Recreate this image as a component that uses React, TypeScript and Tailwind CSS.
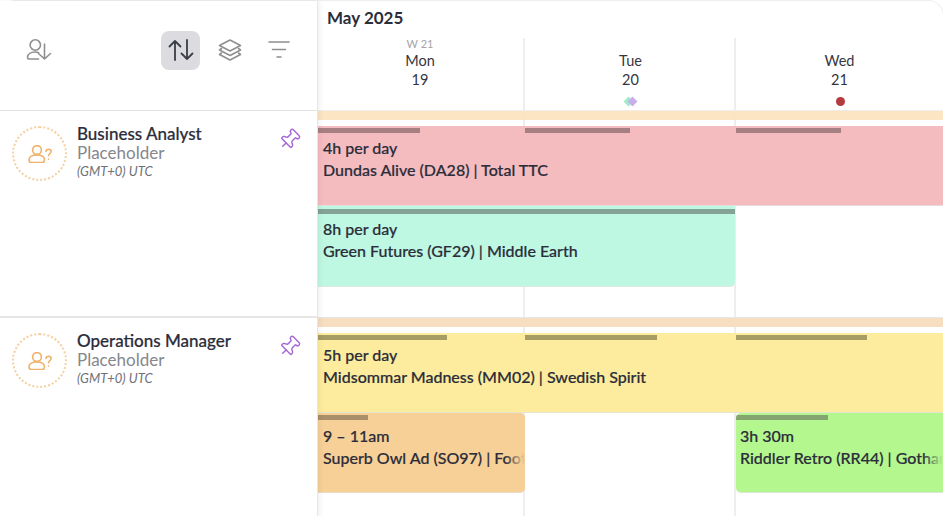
import { Pin } from 'lucide-react';

const days = [
  { week: 'W 21', name: 'Mon', date: '19' },
  { week: '', name: 'Tue', date: '20' },
  { week: '', name: 'Wed', date: '21' },
];

function UserSortIcon() {
  return (
    <svg width="26" height="24" viewBox="0 0 26 24" fill="none" stroke="#8f8f8f" strokeWidth="1.600" strokeLinecap="round" strokeLinejoin="round">
      <circle cx="9.300" cy="7" r="5.200" />
      <path d="M12.500 21H3a1.500 1.500 0 0 1-1.500-1.500c0-3.500 3.500-5.500 7.500-5.500 1.500 0 2.500.2 3.500.6" />
      <path d="M18.500 6v15M12.500 15.500l6 5.500 6-5.500" />
    </svg>
  );
}

function SortIcon() {
  return (
    <svg width="26" height="24" viewBox="0 0 26 24" fill="none" stroke="#3a3d47" strokeWidth="1.800" strokeLinecap="round" strokeLinejoin="round">
      <path d="M7 22V3M1.500 8.500 7 3l5.500 5.500" />
      <path d="M19 2v19M13.500 15.500 19 21l5.500-5.500" />
    </svg>
  );
}

function LayersIcon() {
  return (
    <svg width="24" height="24" viewBox="0 0 24 24" fill="none" stroke="#8f8f8f" strokeWidth="1.600" strokeLinecap="round" strokeLinejoin="round">
      <path d="M12 2 22.500 7.500 12 13 1.500 7.500Z" />
      <path d="M3.500 10.500 1.500 12 12 17.500 22.500 12l-2-1.500" />
      <path d="M3.500 15 1.500 16.500 12 22l10.500-5.500-2-1.500" />
    </svg>
  );
}

function FilterIcon() {
  return (
    <svg width="22" height="20" viewBox="0 0 22 20" fill="none" stroke="#8f8f8f" strokeWidth="1.600" strokeLinecap="round">
      <path d="M1 2h20M4.500 9.500h13M9 17h4" />
    </svg>
  );
}

function PlaceholderAvatar() {
  return (
    <div className="flex h-[55px] w-[55px] shrink-0 items-center justify-center rounded-full border-2 border-dotted border-[#f5d0a0]">
      <svg width="24" height="18" viewBox="0 0 24 18" fill="none" stroke="#f0b26a" strokeWidth="1.600" strokeLinecap="round" strokeLinejoin="round">
        <circle cx="9" cy="5" r="4.400" />
        <path d="M1 15c0-3.500 3.500-5 8-5s7.500 1.500 7.500 5c0 1.500-1 2.500-2.500 2.500H3.500C2 17.500 1 16.500 1 15Z" />
        <path d="M18 6.500c0-1.500 1.200-2.300 2.500-2.300s2.700.8 2.700 2.400c0 2-2.700 2-2.700 4.200" />
        <path d="M20.500 14v.1" />
      </svg>
    </div>
  );
}

function Resource({ name }: { name: string }) {
  return (
    <div className="flex items-start pl-3 pr-[15px] pt-[15px]">
      <PlaceholderAvatar />
      <div className="ml-[10px] flex-1 -mt-[2px]">
        <p className="text-[17px] leading-[19px] font-medium text-[#2b2d3a] [-webkit-text-stroke:0.2px_#2b2d3a]">{name}</p>
        <p className="text-[17px] leading-[20px] text-[#85878d]">Placeholder</p>
        <p className="text-[13px] leading-[16px] italic text-[#6f7177]">(GMT+0) UTC</p>
      </div>
      <Pin className="mr-px mt-[2px] h-[23px] w-[23px] rotate-45 text-[#a566d6]" strokeWidth={1.500} />
    </div>
  );
}

function Bars({ bars, tone }: { bars: string[]; tone: string }) {
  return (
    <div className={`grid h-[5px] ${bars.length === 3 ? 'grid-cols-[207px_211px_1fr]' : 'grid-cols-1'}`}>
      {bars.map((w, i) => (
        <div key={i} className={`h-[5px] ${w} ${tone}`} />
      ))}
    </div>
  );
}

function BlockText({ hours, title, className = 'pl-[5px] pt-1' }: { hours: string; title: string; className?: string }) {
  return (
    <div className={`whitespace-nowrap text-[16px] leading-[22px] font-medium text-[#2b2d3a] [-webkit-text-stroke:0.2px_#2b2d3a] ${className}`}>
      <p>{hours}</p>
      <p>{title}</p>
    </div>
  );
}

export default function App() {
  return (
    <div className="h-[516px] w-[943px] overflow-hidden bg-white font-['Lato','Liberation_Sans',sans-serif]">
      <div className="flex h-[530px] rounded-t-[16px] border-x border-t border-[#eeeeee] -mx-px w-[945px]">
        {/* Left column */}
        <div className="relative z-10 w-[318px] shrink-0 border-r border-[#e6e6e6] bg-white shadow-[2px_0_5px_rgba(0,0,0,0.06)]">
          <div className="flex h-[110px] items-center border-b border-[#e2e2e2] pb-[11px] pl-[26px] pr-[27px]">
            <UserSortIcon />
            <div className="ml-auto flex h-[39px] w-[39px] items-center justify-center rounded-[8px] bg-[#dcdce0]">
              <SortIcon />
            </div>
            <div className="ml-[18px]"><LayersIcon /></div>
            <div className="ml-[26px]"><FilterIcon /></div>
          </div>
          <div className="h-[207px] border-b-2 border-[#e6e6e6]">
            <Resource name="Business Analyst" />
          </div>
          <Resource name="Operations Manager" />
        </div>

        {/* Calendar */}
        <div className="relative w-[625px] shrink-0">
          {/* day lines sit behind the bookings */}
          <div className="absolute inset-x-0 bottom-0 top-[37px] grid grid-cols-[207px_211px_1fr]">
            <div className="border-r-2 border-[#eeeeee]" />
            <div className="border-r-2 border-[#eeeeee]" />
            <div />
          </div>

          <div className="relative">
            <div className="h-[36px] pl-[9px] pt-[6px] text-[17px] leading-[22px] font-bold text-[#2b2d3a]">May 2025</div>
            <div className="grid h-[73px] grid-cols-[207px_211px_1fr] text-center text-[#34363f]">
              {days.map((d, i) => (
                <div key={d.name} className={`flex flex-col items-center ${i === 0 ? 'pr-[3px]' : ''}`}>
                  <p className="h-[14px] text-[11px] leading-[14px] text-[#a3a5a9]">{d.week}</p>
                  <p className="mt-px text-[14.500px] leading-[18px]">{d.name}</p>
                  <p className="text-[14.500px] leading-[19px]">{d.date}</p>
                  {i === 1 && (
                    <div className="mt-[8px] flex h-2 items-center">
                      <span className="h-[7px] w-[7px] rotate-45 bg-[#9fecc9]" />
                      <span className="-ml-[3px] h-[7px] w-[7px] rotate-45 bg-[#c8aeea]" />
                    </div>
                  )}
                  {i === 2 && <span className="mt-[8px] ml-px h-[9px] w-[9px] rounded-full bg-[#b53a3f]" />}
                </div>
              ))}
            </div>

            {/* Business Analyst */}
            <div className="h-[207px] border-t border-[#eeeeee]">
              <div className="h-[9px] bg-[#fbe2bd]/90" />
              <div className="mt-[6px] h-[80px] border-b border-[#e6dcdc] bg-[#f5bcc0] pt-[2px]">
                <Bars bars={['w-[102px]', 'w-[105px]', 'w-[105px]']} tone="bg-[#a67f82]" />
                <BlockText hours="4h per day" title="Dundas Alive (DA28) | Total TTC" />
              </div>
              <div className="h-[81px] w-[417px] rounded-br-[5px] border-b border-[#dde8e3] bg-[#bff8e2] pt-[3px]">
                <Bars bars={['w-full']} tone="bg-[#83a396]" />
                <BlockText hours="8h per day" title="Green Futures (GF29) | Middle Earth" />
              </div>
            </div>

            {/* Operations Manager */}
            <div className="border-t border-[#e6e6e6]">
              <div className="h-[9px] bg-[#f8dcbd]/95" />
              <div className="mt-[6px] h-[80px] border-b border-[#e6e3cf] bg-[#feec9e] pt-[2px]">
                <Bars bars={['w-[129px]', 'w-[132px]', 'w-[131px]']} tone="bg-[#a89c65]" />
                <BlockText hours="5h per day" title="Midsommar Madness (MM02) | Swedish Spirit" />
              </div>
              <div className="grid grid-cols-[207px_211px_1fr]">
                <div className="relative h-[80px] overflow-hidden rounded-r-[5px] border-b border-[#e6dcc8] bg-[#f7d098] pt-[2px]">
                  <Bars bars={['w-[50px]']} tone="bg-[#ab8f6b]" />
                  <BlockText hours="9 – 11am" title="Superb Owl Ad (SO97) | Football Fever" className="pl-[5px] pt-[5px]" />
                  <div className="absolute inset-y-0 right-0 w-5 bg-gradient-to-r from-[#f7d098]/0 to-[#f7d098]" />
                </div>
                <div />
                <div className="relative h-[80px] overflow-hidden rounded-l-[5px] border-b border-[#dce6d4] bg-[#b5f78f] pt-[2px]">
                  <Bars bars={['w-[92px]']} tone="bg-[#84a56f]" />
                  <BlockText hours="3h 30m" title="Riddler Retro (RR44) | Gotham City" className="pl-1 pt-[5px]" />
                  <div className="absolute inset-y-0 right-0 w-5 bg-gradient-to-r from-[#b5f78f]/0 to-[#b5f78f]" />
                </div>
              </div>
            </div>
          </div>
        </div>
      </div>
    </div>
  );
}
